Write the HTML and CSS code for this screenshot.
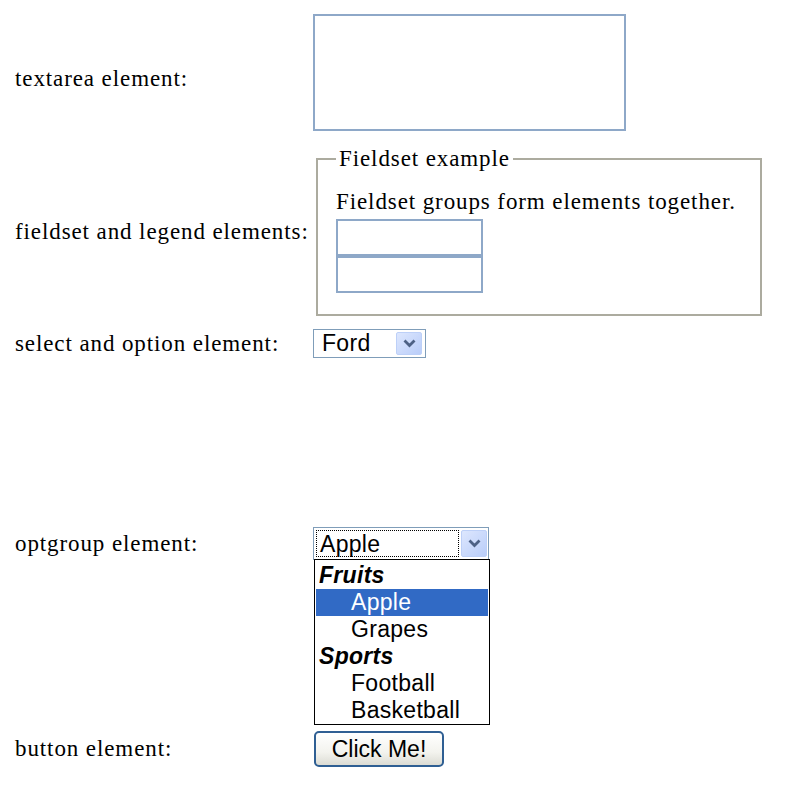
FILE: index.html
```html
<!DOCTYPE html>
<html lang="en">
<head>
  <meta charset="UTF-8">
  <title>Form elements</title>
  <link rel="stylesheet" href="styles.css">
</head>
<body>

<div class="form">
  <div class="row row-textarea">
    <label class="label">textarea element:</label>
    <textarea class="area"></textarea>
  </div>

  <div class="row row-fieldset">
    <label class="label">fieldset and legend elements:</label>
    <fieldset class="group">
      <legend>Fieldset example</legend>
      <p class="group-text">Fieldset groups form elements together.</p>
      <input class="box" type="text">
      <input class="box" type="text">
    </fieldset>
  </div>

  <div class="row row-select">
    <label class="label">select and option element:</label>
    <div class="combo combo-small">
      <span class="combo-value">Ford</span>
      <span class="combo-btn">
        <svg width="13" height="9" viewBox="0 0 13 9"><path d="M1.5 1.5 L6.5 6.5 L11.5 1.5" fill="none" stroke="#4d6185" stroke-width="2.8"/></svg>
      </span>
    </div>
  </div>

  <div class="row row-optgroup">
    <label class="label">optgroup element:</label>
    <div class="combo combo-open">
      <span class="combo-value focused">Apple</span>
      <span class="combo-btn">
        <svg width="13" height="9" viewBox="0 0 13 9"><path d="M1.5 1.5 L6.5 6.5 L11.5 1.5" fill="none" stroke="#4d6185" stroke-width="2.8"/></svg>
      </span>
      <ul class="dropdown">
        <li class="opt-group">Fruits</li>
        <li class="opt selected">Apple</li>
        <li class="opt">Grapes</li>
        <li class="opt-group">Sports</li>
        <li class="opt">Football</li>
        <li class="opt">Basketball</li>
      </ul>
    </div>
  </div>

  <div class="row row-button">
    <label class="label">button element:</label>
    <div><button class="btn" type="button">Click Me!</button></div>
  </div>
</div>

</body>
</html>
```

FILE: styles.css
```css
body {
  margin: 0;
  background: #fff;
  font-family: "Liberation Serif", "Times New Roman", serif;
  font-size: 23px;
  letter-spacing: 0.9px;
  color: #000;
}

.form {
  padding-left: 15px;
}

.row {
  display: grid;
  grid-template-columns: 298px auto;
  align-items: center;
  justify-items: start;
}

.label {
  display: block;
}

.row-textarea {
  margin-top: 14px;
}

.row-textarea .label {
  padding-top: 12px;
}

.row-fieldset {
  margin-top: 17px;
}

.row-select {
  margin-top: 13px;
}

.row-optgroup {
  margin-top: 169px;
}

.row-button {
  margin-top: 171px;
}

.area {
  display: block;
  box-sizing: border-box;
  width: 313px;
  height: 117px;
  margin: 0;
  border: 2px solid #8ea8c8;
  resize: none;
}

.group {
  box-sizing: border-box;
  width: 446px;
  height: 168px;
  margin: 0 0 0 3px;
  padding: 0 18px 0 18px;
  border: 2px solid #acab9f;
}

.group legend {
  padding: 0 3px;
  line-height: 22px;
}

.group-text {
  margin: 20px 0 5px;
  line-height: 24px;
}

.box {
  display: block;
  box-sizing: border-box;
  width: 147px;
  height: 37px;
  margin: 0;
  border: 2px solid #8ea8c8;
}

/* drop-down look-alikes */
.combo {
  position: relative;
  display: flex;
  align-items: center;
  box-sizing: border-box;
  border: 1px solid #7f9db9;
  background: #fff;
  font-family: "Liberation Sans", Arial, sans-serif;
  font-size: 23px;
  letter-spacing: 0.3px;
}

.combo-small {
  width: 113px;
  height: 29px;
  padding: 2px;
}

.combo-open {
  width: 176px;
  height: 33px;
  padding: 2px 1px 2px 2px;
}

.combo-value {
  flex: 1;
  padding-left: 6px;
  line-height: 25px;
}

.combo-value.focused {
  align-self: stretch;
  padding-left: 3px;
  margin-right: 2px;
  border: 1px dotted #000;
  line-height: 27px;
}

.combo-btn {
  display: flex;
  align-items: center;
  justify-content: center;
  width: 26px;
  align-self: stretch;
  border-radius: 2px;
  background: linear-gradient(135deg, #dde7fe, #b9cdf9);
  border: 1px solid #bdd0f8;
  box-sizing: border-box;
}

.combo-small .combo-btn {
  margin-right: 1px;
}

.dropdown {
  position: absolute;
  top: 100%;
  left: 0;
  width: 176px;
  height: 166px;
  box-sizing: border-box;
  margin: 0;
  padding: 2px 1px;
  list-style: none;
  border: 1px solid #000;
  background: #fff;
}

.dropdown li {
  height: 27px;
  line-height: 27px;
}

.opt-group {
  padding-left: 3px;
  font-weight: bold;
  font-style: italic;
}

.opt {
  padding-left: 35px;
}

.opt.selected {
  background: #316ac5;
  color: #fff;
}

.btn {
  box-sizing: border-box;
  width: 130px;
  height: 36px;
  margin-left: 1px;
  border: 2px solid #2f5f93;
  border-radius: 5px;
  background: linear-gradient(#ffffff, #f3f3ee 60%, #dcdcd4);
  font-family: "Liberation Sans", Arial, sans-serif;
  font-size: 23px;
  color: #000;
}
```
